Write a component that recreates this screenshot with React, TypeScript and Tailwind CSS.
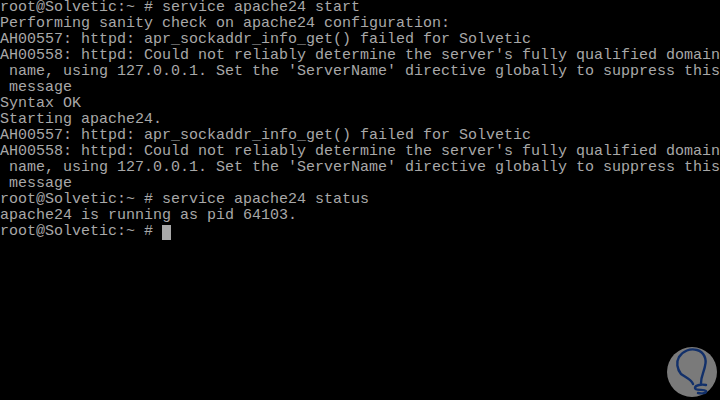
const LINES = [
    "root@Solvetic:~ # service apache24 start",
    "Performing sanity check on apache24 configuration:",
    "AH00557: httpd: apr_sockaddr_info_get() failed for Solvetic",
    "AH00558: httpd: Could not reliably determine the server's fully qualified domain",
    " name, using 127.0.0.1. Set the 'ServerName' directive globally to suppress this",
    " message",
    "Syntax OK",
    "Starting apache24.",
    "AH00557: httpd: apr_sockaddr_info_get() failed for Solvetic",
    "AH00558: httpd: Could not reliably determine the server's fully qualified domain",
    " name, using 127.0.0.1. Set the 'ServerName' directive globally to suppress this",
    " message",
    "root@Solvetic:~ # service apache24 status",
    "apache24 is running as pid 64103.",
];

const Logo = () => (
    <svg viewBox="0 0 50 50" className="w-[50px] h-[50px]">
        <circle cx="25" cy="25" r="25" fill="#7a7a7a" />
        <path
            d="M26,37 C25,33 18,30 14,27 C10,22 9,15 12,10 C16,4 23,1 30,3 C37,5 40,12 38,19 C37,25 34,29 34,36 M39,38 C35,37 28,38 28,41 C28,44 37,42 39,44 C40,46 35,47 31,46"
            fill="none"
            stroke="#12306a"
            strokeWidth="2.4"
            strokeLinecap="round"
        />
    </svg>
);

export default function App() {
    return (
        <div className="relative w-[720px] h-[400px] bg-black overflow-hidden">
            <div className="flex flex-col font-['Liberation_Mono',monospace] text-[15px] leading-[16px] text-[#a8a8a8] whitespace-pre">
                {LINES.map((line, i) => (
                    <div key={i} className="h-[16px]">
                        {line}
                    </div>
                ))}
                <div className="h-[16px] flex items-end">
                    <span>root@Solvetic:~ # </span>
                    <span className="w-[9px] h-[15px] bg-[#a8a8a8]"></span>
                </div>
            </div>
            <div className="absolute right-[3px] bottom-[3px]">
                <Logo />
            </div>
        </div>
    );
}
